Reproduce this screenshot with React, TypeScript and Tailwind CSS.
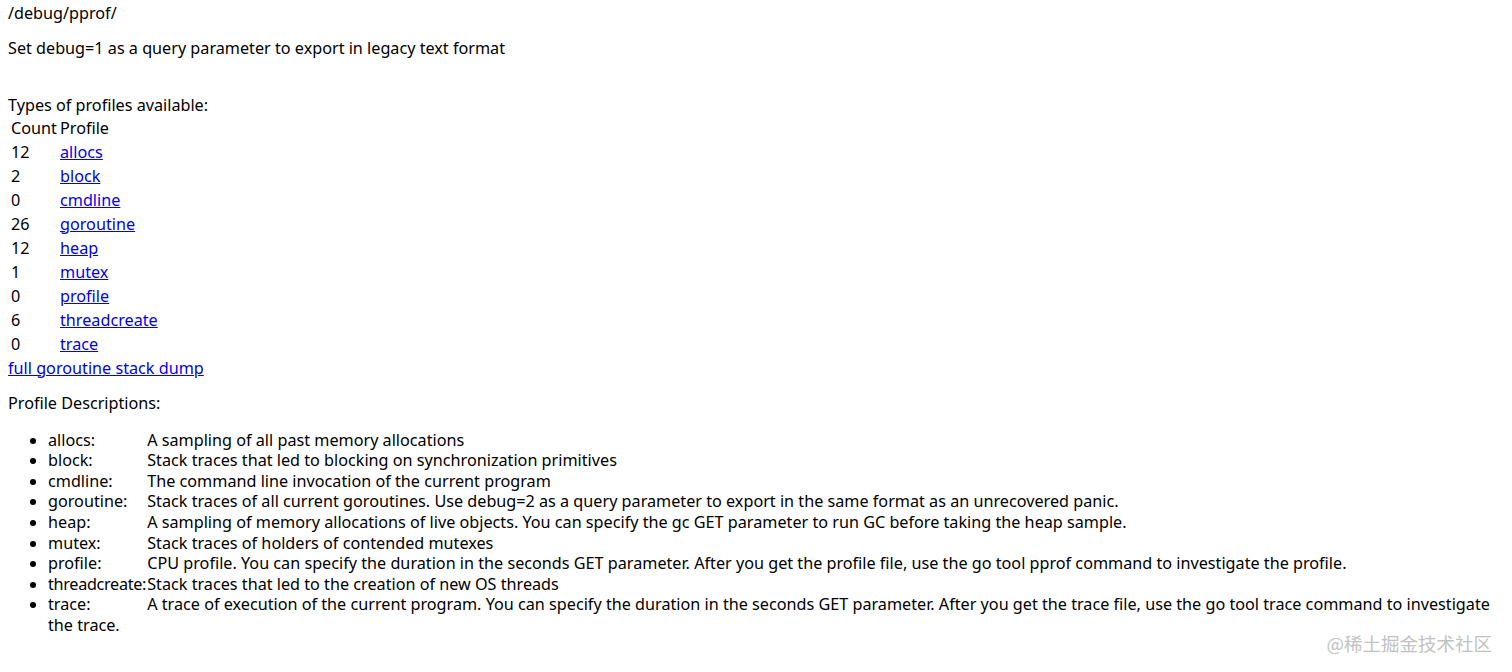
const rows: [string, string][] = [
  ["12", "allocs"],
  ["2", "block"],
  ["0", "cmdline"],
  ["26", "goroutine"],
  ["12", "heap"],
  ["1", "mutex"],
  ["0", "profile"],
  ["6", "threadcreate"],
  ["0", "trace"],
];

const descs: [string, string][] = [
  ["allocs:", "A sampling of all past memory allocations"],
  ["block:", "Stack traces that led to blocking on synchronization primitives"],
  ["cmdline:", "The command line invocation of the current program"],
  ["goroutine:", "Stack traces of all current goroutines. Use debug=2 as a query parameter to export in the same format as an unrecovered panic."],
  ["heap:", "A sampling of memory allocations of live objects. You can specify the gc GET parameter to run GC before taking the heap sample."],
  ["mutex:", "Stack traces of holders of contended mutexes"],
  ["profile:", "CPU profile. You can specify the duration in the seconds GET parameter. After you get the profile file, use the go tool pprof command to investigate the profile."],
];

export default function App() {
  return (
    <div
      className="relative min-h-[672px] w-full overflow-hidden bg-white px-2 pt-[2.5px] text-[16.2px] leading-[20.3px] text-black"
      style={{ fontFamily: '"Noto Sans", sans-serif' }}
    >
      <div>/debug/pprof/</div>
      <div className="mt-[15px]">Set debug=1 as a query parameter to export in legacy text format</div>
      <div className="mt-[37.4px]">Types of profiles available:</div>
      <div className="pl-[3px]">
        <div className="flex h-[24px] items-center leading-[24px]">
          <div className="w-[49px]">Count</div>
          <div>Profile</div>
        </div>
        {rows.map(([c, n]) => (
          <div key={n} className="flex h-[24px] items-center leading-[24px]">
            <div className="w-[49px]">{c}</div>
            <a href="#" className="text-[#0000ee] underline">
              {n}
            </a>
          </div>
        ))}
      </div>
      <div className="mt-[2px]">
        <a href="#" className="text-[#0000ee] underline">
          full goroutine stack dump
        </a>
      </div>
      <div className="mt-[15px]">Profile Descriptions:</div>
      <ul className="mt-[16.2px] list-disc pl-[40px] leading-[20.6px]">
        {descs.map(([n, d]) => (
          <li key={n} className="whitespace-nowrap">
            <div className="inline-block w-[95px]">{n} </div> {d}
          </li>
        ))}
        <li className="whitespace-nowrap">
          <div className="inline-block w-[95px] tracking-[-0.3px]">threadcreate:</div>{" "}
          Stack traces that led to the creation of new OS threads
        </li>
        <li>
          <span className="whitespace-nowrap">
            <span className="inline-block w-[95px]">trace: </span> A trace of execution of the current program. You can specify the duration in the seconds GET parameter. After you get the trace file, use the go tool trace command to investigate
          </span>
          <br />
          the trace.
        </li>
      </ul>
      <div
        className="absolute right-[20px] top-[634px] text-[18.5px] leading-none text-[#c2c2c2]"
        style={{ fontFamily: '"Noto Sans CJK SC", "Noto Sans", sans-serif' }}
      >
        @稀土掘金技术社区
      </div>
    </div>
  );
}
